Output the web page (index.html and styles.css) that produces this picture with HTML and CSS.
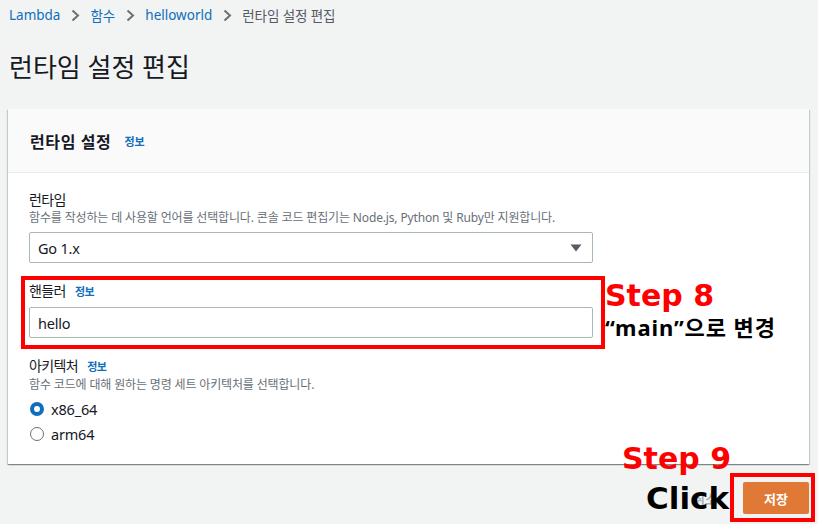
FILE: index.html
```html
<!DOCTYPE html>
<html lang="ko">
<head>
<meta charset="utf-8">
<link rel="stylesheet" href="styles.css">
</head>
<body>
<div class="page">
  <nav class="crumbs">
    <a class="crumb-link">Lambda</a>
    <svg class="chev" width="9" height="13" viewBox="0 0 9 13"><path d="M1.5 1.5 L7 6.5 L1.5 11.5" fill="none" stroke="#687078" stroke-width="2"/></svg>
    <a class="crumb-link">함수</a>
    <svg class="chev" width="9" height="13" viewBox="0 0 9 13"><path d="M1.5 1.5 L7 6.5 L1.5 11.5" fill="none" stroke="#687078" stroke-width="2"/></svg>
    <a class="crumb-link">helloworld</a>
    <svg class="chev" width="9" height="13" viewBox="0 0 9 13"><path d="M1.5 1.5 L7 6.5 L1.5 11.5" fill="none" stroke="#687078" stroke-width="2"/></svg>
    <span class="crumb-current">런타임 설정 편집</span>
  </nav>

  <h1 class="title">런타임 설정 편집</h1>

  <section class="card">
    <header class="card-head">
      <h2 class="card-title">런타임 설정</h2>
      <a class="info info-head">정보</a>
    </header>
    <div class="card-body">
      <div class="field">
        <div class="label">런타임</div>
        <div class="desc">함수를 작성하는 데 사용할 언어를 선택합니다. 콘솔 코드 편집기는 Node.js, Python 및 Ruby만 지원합니다.</div>
        <div class="select">
          <span class="control-text">Go 1.x</span>
          <svg width="12" height="8" viewBox="0 0 12 8"><path d="M0.5 0.5 H11.5 L6 7.5 Z" fill="#545b64"/></svg>
        </div>
      </div>

      <div class="field field-gap">
        <div class="label">핸들러 <a class="info">정보</a></div>
        <div class="input"><span class="control-text">hello</span></div>
      </div>

      <div class="field field-gap">
        <div class="label">아키텍처 <a class="info">정보</a></div>
        <div class="desc">함수 코드에 대해 원하는 명령 세트 아키텍처를 선택합니다.</div>
        <div class="radios">
          <div class="radio-row"><span class="radio radio-on"></span><span class="radio-text">x86_64</span></div>
          <div class="radio-row"><span class="radio"></span><span class="radio-text">arm64</span></div>
        </div>
      </div>
    </div>
  </section>

  <div class="actions">
    <button class="btn-cancel">취소</button>
    <button class="btn-save">저장</button>
  </div>

  <div class="mark mark-handler"></div>
  <div class="step step8">Step 8</div>
  <div class="note note8">“main”으로 변경</div>
  <div class="step step9">Step 9</div>
  <div class="click">Click</div>
  <div class="mark mark-save"></div>
</div>
</body>
</html>
```

FILE: styles.css
```css
html, body {
  margin: 0;
  padding: 0;
}
body {
  background: #f2f3f3;
  font-family: "Noto Sans", "Noto Sans CJK KR", sans-serif;
  color: #16191f;
  width: 818px;
  height: 524px;
  overflow: hidden;
}
.page {
  position: relative;
  padding: 0 9px 0 8px;
  height: 524px;
}
.crumbs {
  display: flex;
  align-items: center;
  height: 20px;
  padding-top: 5px;
  padding-left: 1px;
  font-size: 13.5px;
}
.crumb-link {
  color: #0f6fbd;
}
.crumb-current {
  color: #545b64;
  letter-spacing: -0.1px;
}
.chev {
  margin: 0 10px 0 11px;
}
.title {
  margin: 26px 0 0 1px;
  font-size: 26px;
  line-height: 32px;
  font-weight: 400;
  letter-spacing: 0;
}
.card {
  margin-top: 26px;
  background: #ffffff;
  box-shadow: 0 1px 1px 0 rgba(0, 28, 36, 0.3), 1px 1px 1px 0 rgba(0, 28, 36, 0.15), -1px 1px 1px 0 rgba(0, 28, 36, 0.15);
}
.card-head {
  height: 63px;
  display: flex;
  align-items: center;
  padding: 0 22px;
  background: #fafafa;
  border-bottom: 1px solid #eaeded;
}
.card-title {
  margin: 0;
  font-size: 16px;
  font-weight: 700;
  letter-spacing: 0.6px;
}
.info {
  color: #0f6fbd;
  font-size: 11px;
  font-weight: 700;
}
.info-head {
  margin-left: 13px;
}
.label .info {
  margin-left: 6px;
}
.card-body {
  padding: 18px 21px 18px 21px;
}
.field-gap {
  margin-top: 19px;
}
.label {
  font-size: 14px;
  line-height: 18px;
  letter-spacing: -0.6px;
}
.desc {
  font-size: 12px;
  line-height: 16px;
  color: #687078;
  letter-spacing: -0.15px;
  margin-top: 1px;
}
.select, .input {
  box-sizing: border-box;
  width: 564px;
  height: 31px;
  margin-top: 6px;
  border: 1px solid #aab7b8;
  border-radius: 2px;
  background: #fff;
  display: flex;
  align-items: center;
  justify-content: space-between;
  padding: 0 10px 0 8px;
}
.control-text {
  font-size: 14.5px;
  letter-spacing: -0.2px;
}
.radios {
  margin-top: 3px;
}
.radio-row {
  display: flex;
  align-items: center;
  height: 25px;
}
.radio {
  box-sizing: border-box;
  width: 14px;
  height: 14px;
  border-radius: 50%;
  border: 1.5px solid #687078;
  margin-left: 1px;
  margin-right: 7px;
}
.radio-on {
  border: 4px solid #0f6fbd;
}
.radio-text {
  font-size: 14.5px;
  letter-spacing: -0.2px;
}
.actions {
  display: flex;
  justify-content: flex-end;
  align-items: center;
  margin-top: 18px;
  gap: 6px;
}
.btn-cancel {
  background: transparent;
  border: none;
  font-family: "Noto Sans", "Noto Sans CJK KR", sans-serif;
  font-size: 13px;
  font-weight: 700;
  color: #aab0b6;
  padding: 0 20px;
  height: 32px;
}
.btn-save {
  width: 66px;
  height: 32px;
  border: none;
  border-radius: 2px;
  background: #e07936;
  color: #ffffff;
  font-family: "Noto Sans", "Noto Sans CJK KR", sans-serif;
  font-size: 13px;
  font-weight: 700;
  padding: 0;
}
.mark {
  position: absolute;
  box-sizing: border-box;
  border: 4px solid #ff0000;
}
.mark-handler {
  left: 21px;
  top: 276px;
  width: 584px;
  height: 73px;
}
.mark-save {
  left: 730px;
  top: 473px;
  width: 85px;
  height: 49px;
}
.step {
  position: absolute;
  font-family: "DejaVu Sans", sans-serif;
  font-weight: 700;
  font-size: 30px;
  line-height: 30px;
  color: #ff0000;
  white-space: nowrap;
}
.step8 {
  left: 605px;
  top: 281px;
}
.step9 {
  left: 622px;
  top: 444px;
}
.note {
  position: absolute;
  font-family: "Noto Sans", "Noto Sans CJK KR", sans-serif;
  font-weight: 700;
  font-size: 22px;
  line-height: 24px;
  color: #000;
  white-space: nowrap;
  letter-spacing: 0.9px;
}
.note8 {
  left: 605px;
  top: 315px;
}
.click {
  position: absolute;
  left: 646px;
  top: 483px;
  font-family: "DejaVu Sans", sans-serif;
  font-weight: 700;
  font-size: 31px;
  line-height: 31px;
  color: #000;
}
```
